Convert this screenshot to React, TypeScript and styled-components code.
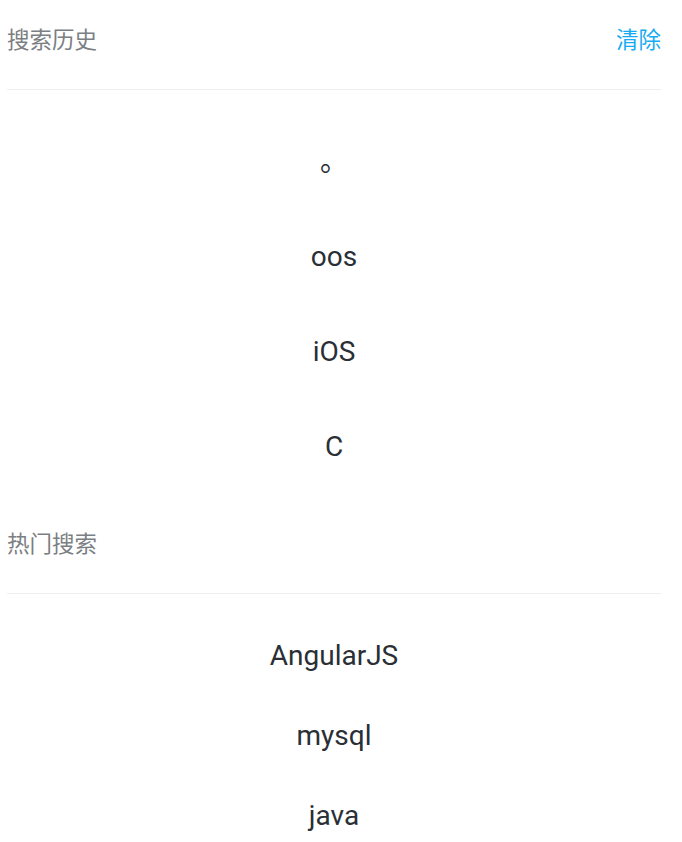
import React from 'react';
import styled, { createGlobalStyle } from 'styled-components';

const GlobalStyle = createGlobalStyle`
  body {
    margin: 0;
    background: #fff;
    font-family: Roboto, "Noto Sans CJK SC", sans-serif;
  }
`;

const Page = styled.div`
  padding: 0 21px 0 7px;
`;

const SectionHeader = styled.div`
  display: flex;
  justify-content: space-between;
  align-items: center;
  height: 30px;
  padding: 23px 0 36px;
  border-bottom: 1px solid #efefef;
`;

const HeaderTitle = styled.span`
  font-size: 22.5px;
  color: #7b7e82;
`;

const ClearButton = styled.span`
  font-size: 22.5px;
  color: #16aaf2;
  cursor: pointer;
`;

const WordList = styled.ul<{ $rowHeight: number; $top: number; $bottom: number }>`
  list-style: none;
  margin: 0;
  padding: ${(p) => p.$top}px 0 ${(p) => p.$bottom}px;

  li {
    height: ${(p) => p.$rowHeight}px;
    line-height: ${(p) => p.$rowHeight}px;
    text-align: center;
    font-size: 28px;
    color: #2a2f36;
  }
`;

const history = ['。', 'oos', 'iOS', 'C'];
const hot = ['AngularJS', 'mysql', 'java'];

const App = () => {
  return (
    <>
      <GlobalStyle />
      <Page>
        <SectionHeader>
          <HeaderTitle>搜索历史</HeaderTitle>
          <ClearButton>清除</ClearButton>
        </SectionHeader>
        <WordList $rowHeight={95} $top={24} $bottom={10}>
          {history.map((w) => (
            <li key={w}>{w}</li>
          ))}
        </WordList>
        <SectionHeader>
          <HeaderTitle>热门搜索</HeaderTitle>
        </SectionHeader>
        <WordList $rowHeight={80} $top={22} $bottom={0}>
          {hot.map((w) => (
            <li key={w}>{w}</li>
          ))}
        </WordList>
      </Page>
    </>
  );
};

export default App;
